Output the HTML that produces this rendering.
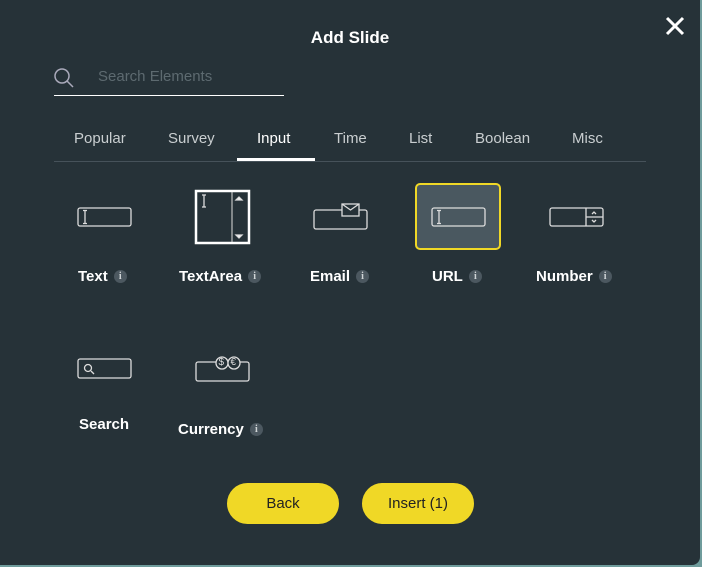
<!DOCTYPE html>
<html><head><style>
body{margin:0;width:702px;height:567px;background:#6f9c9c;overflow:hidden;font-family:"Liberation Sans",sans-serif}
.m{position:absolute;left:0;top:0;width:700px;height:565px;background:#263238;border-radius:0 0 8px 0}
.t{position:absolute;color:#fff}
.lbl{position:absolute;color:#fff;font-weight:bold;font-size:15px}
.i{display:inline-block;width:13px;height:13px;border-radius:50%;background:#4c5860;color:#cfd4d6;font-size:10px;text-align:center;line-height:13px;font-family:"Liberation Serif",serif;vertical-align:2px;margin-left:6px}
.tab{position:absolute;top:130px;font-size:15px;color:#c9ced0}
.btn{position:absolute;top:483px;width:112px;height:41px;border-radius:21px;background:#f0d826;color:#222;font-size:15px;text-align:center;line-height:41px}
svg{position:absolute}
</style></head><body><div class="m">
<div class="t" style="left:0;width:700px;text-align:center;top:28px;font-weight:bold;font-size:17px">Add Slide</div>
<svg style="left:664px;top:15px" width="22" height="22"><path d="M3 3L19 19M19 3L3 19" stroke="#fff" stroke-width="3"/></svg>
<svg style="left:53px;top:67px" width="22" height="22"><circle cx="9" cy="9" r="7" fill="none" stroke="#aab" stroke-width="1.5"/><path d="M14 14L20 20" stroke="#aab" stroke-width="1.5"/></svg>
<div class="t" style="left:98px;top:68px;font-size:15px;color:#5d6a70">Search Elements</div>
<div style="position:absolute;left:54px;top:95px;width:230px;height:1px;background:#fff"></div>
<div class="tab" style="left:74px">Popular</div>
<div class="tab" style="left:168px">Survey</div>
<div class="tab" style="left:257px;color:#fff">Input</div>
<div class="tab" style="left:334px">Time</div>
<div class="tab" style="left:409px">List</div>
<div class="tab" style="left:475px">Boolean</div>
<div class="tab" style="left:572px">Misc</div>
<div style="position:absolute;left:54px;top:161px;width:592px;height:1px;background:#46525a"></div>
<div style="position:absolute;left:237px;top:158px;width:78px;height:3px;background:#fff"></div>
<div style="position:absolute;left:415px;top:183px;width:82px;height:63px;border:2px solid #f0d826;border-radius:5px;background:#4a5860"></div>
<svg style="left:0;top:0" width="700" height="450" fill="none" stroke="#ddd" stroke-width="1.3">
<rect x="78" y="208" width="53" height="18" rx="2"/><path d="M85 210.5v13M83 210.5h4M83 223.5h4"/>
<rect x="196" y="191" width="53" height="52" stroke-width="2.5" stroke="#fff"/><path d="M232 192v50" stroke-width="1"/><path d="M204 195v12M202 195h4M202 207h4"/><path d="M236 200l3-3 3 3zM236 235l3 3 3-3z" fill="#fff"/>
<rect x="314" y="210" width="53" height="19" rx="2"/><rect x="342" y="204" width="17" height="12" fill="#263238"/><path d="M342 204l8.5 6 8.5-6"/>
<rect x="432" y="208" width="53" height="18" rx="2"/><path d="M439 210.5v13M437 210.5h4M437 223.5h4"/>
<rect x="550" y="208" width="53" height="18" rx="2"/><path d="M586 208v18M586 217h17M592 214l2-2 2 2M592 220l2 2 2-2"/>
<rect x="78" y="359" width="53" height="19" rx="2"/><circle cx="88" cy="368" r="3.5"/><path d="M91 371l3 3"/>
<rect x="196" y="362" width="53" height="19" rx="2"/><circle cx="222" cy="363" r="6" fill="#263238"/><circle cx="234" cy="363" r="6" fill="#263238"/>
</svg>
<div style="position:absolute;left:218.5px;top:357px;font-size:10px;color:#ddd">$</div>
<div style="position:absolute;left:230.5px;top:357px;font-size:10px;color:#ddd">€</div>
<div class="lbl" style="left:78px;top:268px">Text<span class="i">i</span></div>
<div class="lbl" style="left:179px;top:268px">TextArea<span class="i">i</span></div>
<div class="lbl" style="left:310px;top:268px">Email<span class="i">i</span></div>
<div class="lbl" style="left:432px;top:268px">URL<span class="i">i</span></div>
<div class="lbl" style="left:536px;top:268px">Number<span class="i">i</span></div>
<div class="lbl" style="left:79px;top:416px">Search</div>
<div class="lbl" style="left:178px;top:421px">Currency<span class="i">i</span></div>
<div class="btn" style="left:227px">Back</div>
<div class="btn" style="left:362px">Insert (1)</div>
</div></body></html>
